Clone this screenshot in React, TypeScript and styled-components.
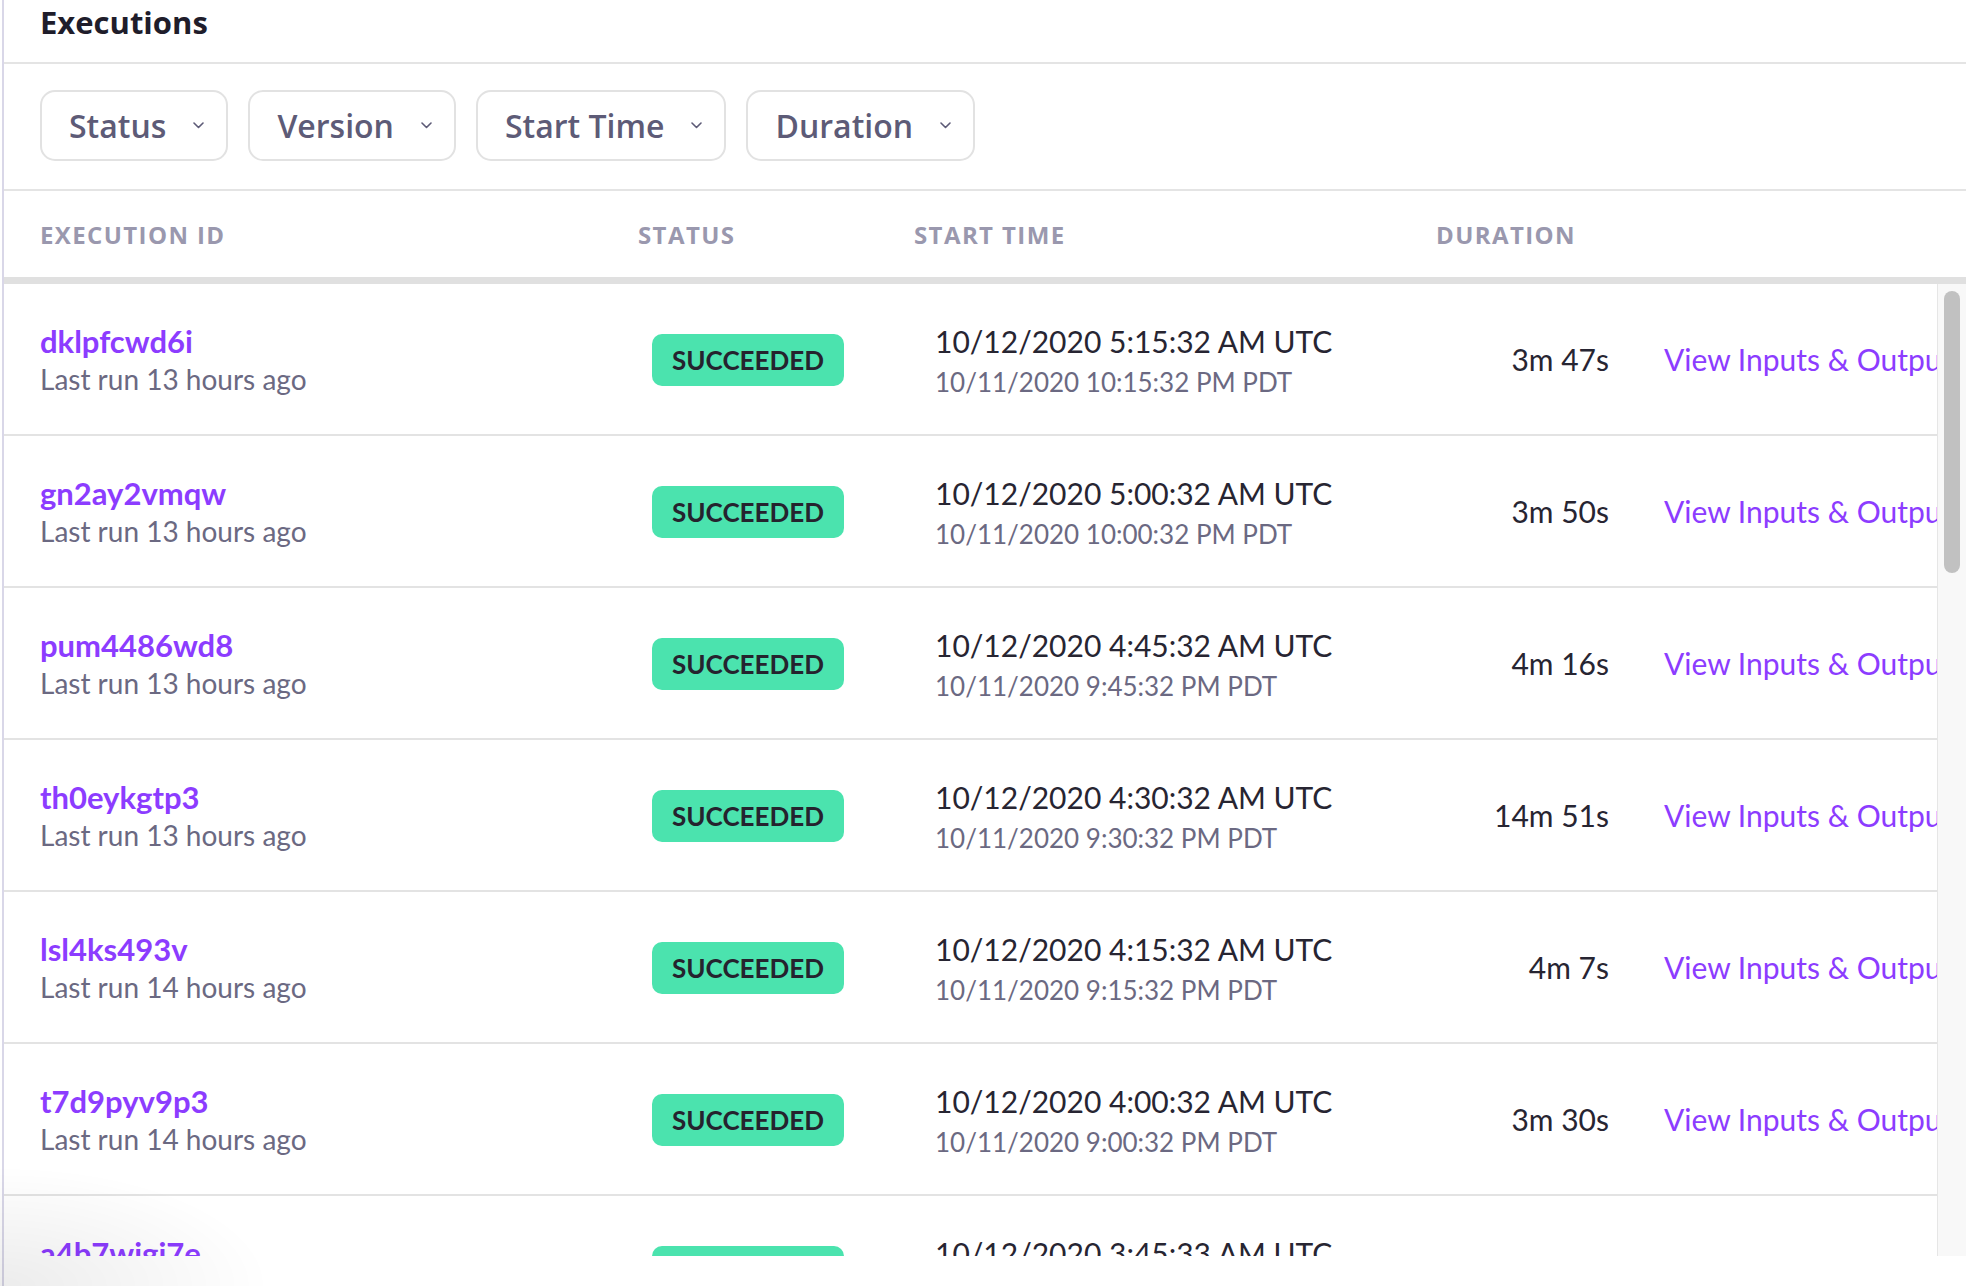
import React from "react";
import styled, { createGlobalStyle } from "styled-components";

const GlobalStyle = createGlobalStyle`
  html, body { margin: 0; padding: 0; background: #ffffff; overflow: hidden; }
  * { box-sizing: border-box; }
`;

const Page = styled.div`
  margin-left: 2px;
  border-left: 2px solid #d9d7e8;
  height: 100vh;
  background: #ffffff;
  font-family: "Lato", "Open Sans", sans-serif;
`;

const TitleBar = styled.div`
  height: 64px;
  padding: 4px 0 0 36px;
  border-bottom: 2px solid #e4e4e4;
`;

const Title = styled.h2`
  margin: 0;
  font-family: "Open Sans", sans-serif;
  font-weight: 700;
  font-size: 31px;
  line-height: 36px;
  color: #1f1d2b;
`;

const FilterBar = styled.div`
  height: 127px;
  padding: 26px 0 0 36px;
  border-bottom: 2px solid #e4e4e4;
  display: flex;
  gap: 20px;
  align-items: flex-start;
`;

const FilterButton = styled.button`
  height: 71px;
  display: flex;
  align-items: center;
  gap: 27px;
  padding: 0 22px 0 27px;
  border: 2px solid #e2e2e2;
  border-radius: 15px;
  background: #ffffff;
  font-family: "Open Sans", sans-serif;
  font-weight: 600;
  font-size: 32px;
  color: #5d5b77;
  cursor: pointer;
`;

const Chevron = () => (
  <svg width="11" height="7" viewBox="0 0 11 7" fill="none">
    <polyline points="1,1 5.5,5.5 10,1" stroke="#5d5b77" strokeWidth="1.6" strokeLinecap="round" strokeLinejoin="round" />
  </svg>
);

const columns = "598px 276px 522px 173px minmax(0, 1fr)";

const HeaderRow = styled.div`
  height: 93px;
  display: grid;
  grid-template-columns: ${columns};
  align-items: center;
  padding-left: 36px;
  border-bottom: 7px solid #e0e0e0;
`;

const HeaderLabel = styled.div`
  font-family: "Open Sans", sans-serif;
  font-weight: 700;
  font-size: 24px;
  letter-spacing: 1.4px;
  color: #9a98ae;
  text-transform: uppercase;
  white-space: nowrap;
`;

const Scroller = styled.div`
  height: 972px;
  display: flex;
`;

const List = styled.div`
  flex: 1;
  min-width: 0;
  overflow: hidden;
`;

const ScrollTrack = styled.div`
  width: 29px;
  flex-shrink: 0;
  background: #f8f8f8;
  border-left: 1px solid #e6e6e6;
  padding: 7px 6px 0 6px;
`;

const ScrollThumb = styled.div`
  width: 16px;
  height: 282px;
  border-radius: 8px;
  background: #c1c1c1;
`;

const Row = styled.div`
  height: 152px;
  display: grid;
  grid-template-columns: ${columns};
  align-items: center;
  padding-left: 36px;
  border-bottom: 2px solid #e3e3e3;
  overflow: hidden;
`;

const Stack = styled.div<{ $indent?: number; $gap: number; $top: number }>`
  display: flex;
  flex-direction: column;
  gap: ${(p) => p.$gap}px;
  padding-top: ${(p) => p.$top}px;
  padding-left: ${(p) => p.$indent ?? 0}px;
  white-space: nowrap;
`;

const IdLink = styled.a`
  font-family: "Lato", sans-serif;
  font-weight: 700;
  font-size: 31px;
  line-height: 36px;
  color: #8c3cff;
  text-decoration: none;
`;

const SubText = styled.span<{ $size?: number }>`
  font-family: "Lato", sans-serif;
  font-weight: 400;
  font-size: ${(p) => p.$size ?? 26}px;
  line-height: 34px;
  color: #6b6982;
`;

const MainText = styled.span`
  font-family: "Lato", sans-serif;
  font-weight: 400;
  font-size: 30px;
  line-height: 36px;
  color: #272532;
`;

const Badge = styled.span`
  justify-self: start;
  margin-left: 14px;
  margin-top: 1px;
  height: 52px;
  width: 192px;
  display: inline-flex;
  align-items: center;
  justify-content: center;
  border-radius: 10px;
  background: #4be3ae;
  font-family: "Lato", sans-serif;
  font-weight: 700;
  font-size: 26px;
  color: #25232e;
`;

const Duration = styled.span`
  justify-self: end;
  font-family: "Lato", sans-serif;
  font-size: 30px;
  color: #272532;
  white-space: nowrap;
`;

const ActionLink = styled.a`
  padding-left: 55px;
  font-family: "Lato", sans-serif;
  font-size: 30px;
  color: #8c3cff;
  white-space: nowrap;
  text-decoration: none;
`;

const Vignette = styled.div`
  position: fixed;
  left: 0;
  bottom: 0;
  width: 340px;
  height: 150px;
  pointer-events: none;
  background: radial-gradient(ellipse 270px 120px at 0% 100%, rgba(0, 0, 0, 0.075), rgba(0, 0, 0, 0) 100%);
`;

type Exec = {
  id: string;
  ago: string;
  utc: string;
  local: string;
  duration: string;
};

const ids = [
  "dklpfcwd6i", "gn2ay2vmqw", "pum4486wd8", "th0eykgtp3", "lsl4ks493v", "t7d9pyv9p3", "a4b7wigi7e",
  "kz3m8qv1rn", "w9xv2c7hdp", "q5ntl0ajue", "r2fj6ky8sb", "mb7d1xw4ho", "c8pq3zt9lf", "v0gk5ns2ay",
  "e6hw9ru3jd", "y1tc4mb7qx", "o3zs8fe6kp", "h7lv2dq0wn", "u4ny6gx1ct", "f9ar3kp5mz", "j2ws7lb8ve",
];

const durations = [
  "3m 47s", "3m 50s", "4m 16s", "14m 51s", "4m 7s", "3m 30s", "3m 58s",
  "4m 2s", "3m 41s", "5m 12s", "3m 55s", "4m 21s", "3m 36s", "4m 9s",
  "3m 49s", "6m 3s", "3m 44s", "4m 30s", "3m 52s", "4m 14s", "3m 39s",
];

const fmt = (totalMin: number, sec: string, zone: string, day: number) => {
  const h = Math.floor(totalMin / 60);
  const m = totalMin % 60;
  const ampm = h >= 12 ? "PM" : "AM";
  let h12 = h % 12;
  if (h12 === 0) h12 = 12;
  return `10/${day}/2020 ${h12}:${String(m).padStart(2, "0")}:${sec} ${ampm} ${zone}`;
};

const executions: Exec[] = ids.map((id, i) => {
  const utcMin = 5 * 60 + 15 - i * 15;
  const sec = i >= 6 ? "33" : "32";
  const localMin = utcMin - 7 * 60 + 24 * 60;
  const hoursAgo = i < 4 ? 13 : i < 8 ? 14 : 14 + Math.floor((i - 8) / 4);
  return {
    id,
    ago: `Last run ${hoursAgo} hours ago`,
    utc: fmt(utcMin, sec, "UTC", 12),
    local: fmt(localMin, sec, "PDT", 11),
    duration: durations[i],
  };
});

const filters = ["Status", "Version", "Start Time", "Duration"];

export default function App() {
  return (
    <>
      <GlobalStyle />
      <Page>
        <TitleBar>
          <Title>Executions</Title>
        </TitleBar>
        <FilterBar>
          {filters.map((f) => (
            <FilterButton key={f}>
              {f}
              <Chevron />
            </FilterButton>
          ))}
        </FilterBar>
        <HeaderRow>
          <HeaderLabel>Execution ID</HeaderLabel>
          <HeaderLabel>Status</HeaderLabel>
          <HeaderLabel>Start Time</HeaderLabel>
          <HeaderLabel>Duration</HeaderLabel>
          <span />
        </HeaderRow>
        <Scroller>
          <List>
            {executions.map((e) => (
              <Row key={e.id}>
                <Stack $gap={3} $top={0}>
                  <IdLink href="#">{e.id}</IdLink>
                  <SubText $size={28}>{e.ago}</SubText>
                </Stack>
                <Badge>SUCCEEDED</Badge>
                <Stack $indent={21} $gap={6} $top={4}>
                  <MainText>{e.utc}</MainText>
                  <SubText>{e.local}</SubText>
                </Stack>
                <Duration>{e.duration}</Duration>
                <ActionLink href="#">View Inputs &amp; Outputs</ActionLink>
              </Row>
            ))}
          </List>
          <ScrollTrack>
            <ScrollThumb />
          </ScrollTrack>
        </Scroller>
      </Page>
      <Vignette />
    </>
  );
}
